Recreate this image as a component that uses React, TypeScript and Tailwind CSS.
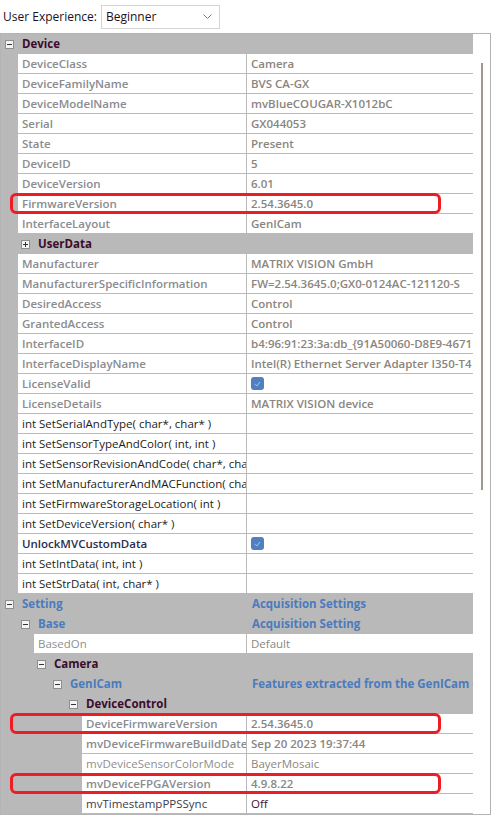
import React from "react";

const FONT = "font-['Open_Sans','Noto_Sans',sans-serif]";

const TONE = {
  gname: "font-semibold text-[#8a8c90]",
  gval: "font-semibold text-[#8a857e]",
  fn: "text-[#1b1b1b]",
  navy: "font-semibold text-[#2a2d4f]",
  light: "text-[#8f8f8f]",
  lightv: "text-[#8b867f]",
  dark: "text-[#3c3c4c]",
  maroon: "text-[#3d1030]",
  blue: "font-bold text-[#4b7bbd]",
  head: "font-bold text-[#3b0c2c]",
};
type Tone = keyof typeof TONE;

type Group = { kind: "group"; level: number; label: string; tone: Tone; value?: string; open?: boolean };
type Leaf = { kind: "leaf"; indent: number; name: string; value?: string; nt: Tone; vt?: Tone; check?: boolean };
type Row = Group | Leaf;

const dev = (name: string, value?: string, check?: boolean): Leaf => ({
  kind: "leaf", indent: 18, name, value, nt: "gname", vt: "gval", check,
});
const fn = (name: string): Leaf => ({ kind: "leaf", indent: 18, name, nt: "fn" });

const ROWS: Row[] = [
  { kind: "group", level: 0, label: "Device", tone: "head", open: true },
  dev("DeviceClass", "Camera"),
  dev("DeviceFamilyName", "BVS CA-GX"),
  dev("DeviceModelName", "mvBlueCOUGAR-X1012bC"),
  dev("Serial", "GX044053"),
  dev("State", "Present"),
  dev("DeviceID", "5"),
  dev("DeviceVersion", "6.01"),
  dev("FirmwareVersion", "2.54.3645.0"),
  dev("InterfaceLayout", "GenICam"),
  { kind: "group", level: 1, label: "UserData", tone: "head", open: false },
  dev("Manufacturer", "MATRIX VISION GmbH"),
  dev("ManufacturerSpecificInformation", "FW=2.54.3645.0;GX0-0124AC-121120-S"),
  dev("DesiredAccess", "Control"),
  dev("GrantedAccess", "Control"),
  dev("InterfaceID", "b4:96:91:23:3a:db_{91A50060-D8E9-4671"),
  dev("InterfaceDisplayName", "Intel(R) Ethernet Server Adapter I350-T4"),
  dev("LicenseValid", undefined, true),
  dev("LicenseDetails", "MATRIX VISION device"),
  fn("int SetSerialAndType( char*, char* )"),
  fn("int SetSensorTypeAndColor( int, int )"),
  fn("int SetSensorRevisionAndCode( char*, char* )"),
  fn("int SetManufacturerAndMACFunction( char* )"),
  fn("int SetFirmwareStorageLocation( int )"),
  fn("int SetDeviceVersion( char* )"),
  { kind: "leaf", indent: 18, name: "UnlockMVCustomData", nt: "navy", check: true },
  fn("int SetIntData( int, int )"),
  fn("int SetStrData( int, char* )"),
  { kind: "group", level: 0, label: "Setting", tone: "blue", value: "Acquisition Settings", open: true },
  { kind: "group", level: 1, label: "Base", tone: "blue", value: "Acquisition Setting", open: true },
  { kind: "leaf", indent: 34, name: "BasedOn", value: "Default", nt: "light", vt: "lightv" },
  { kind: "group", level: 2, label: "Camera", tone: "head", open: true },
  { kind: "group", level: 3, label: "GenICam", tone: "blue", value: "Features extracted from the GenICam device XML file", open: true },
  { kind: "group", level: 4, label: "DeviceControl", tone: "head", open: true },
  { kind: "leaf", indent: 82, name: "DeviceFirmwareVersion", value: "2.54.3645.0", nt: "gname", vt: "gval" },
  { kind: "leaf", indent: 82, name: "mvDeviceFirmwareBuildDate", value: "Sep 20 2023 19:37:44", nt: "gname", vt: "gval" },
  { kind: "leaf", indent: 82, name: "mvDeviceSensorColorMode", value: "BayerMosaic", nt: "light", vt: "lightv" },
  { kind: "leaf", indent: 82, name: "mvDeviceFPGAVersion", value: "4.9.8.22", nt: "gname", vt: "gval" },
  { kind: "leaf", indent: 82, name: "mvTimestampPPSSync", value: "Off", nt: "dark", vt: "maroon" },
];

function Toggle({ open }: { open?: boolean }) {
  return (
    <span className="relative block h-[9px] w-[9px] border border-[#8e8e8e] bg-[#f4f4f4]">
      <span className="absolute left-[1px] top-[3px] h-[1px] w-[5px] bg-[#333]" />
      {!open && <span className="absolute left-[3px] top-[1px] h-[5px] w-[1px] bg-[#333]" />}
    </span>
  );
}

function Check() {
  return (
    <span className="flex h-[13px] w-[13px] items-center justify-center rounded-[3px] bg-[#5080bd]">
      <svg width="7" height="6" viewBox="0 0 7 6">
        <path d="M1 3.2 L2.8 5 L6 1" fill="none" stroke="#c9d7ea" strokeWidth="0.8" />
      </svg>
    </span>
  );
}

function GroupRow({ r }: { r: Group }) {
  return (
    <div className="flex h-[20px] items-center bg-[#b9b9b9]">
      <div className="flex w-[246px] shrink-0 items-center overflow-hidden whitespace-nowrap">
        <div style={{ width: 4 + 16 * r.level }} className="shrink-0" />
        <Toggle open={r.open} />
        <span className={`ml-[8px] ${TONE[r.tone]}`}>{r.label}</span>
      </div>
      <div className={`w-[226px] overflow-hidden whitespace-nowrap pl-[5px] ${TONE[r.tone]}`}>{r.value}</div>
    </div>
  );
}

function LeafRow({ r }: { r: Leaf }) {
  return (
    <div className="flex h-[20px]">
      <div style={{ width: r.indent - 1 }} className="shrink-0 bg-[#b9b9b9]" />
      <div className="flex flex-1 items-center overflow-hidden whitespace-nowrap border-b border-[#bababa] bg-white pl-[4px]">
        <span className={TONE[r.nt]}>{r.name}</span>
      </div>
      <div className="w-[1px] shrink-0 bg-[#bababa]" />
      <div className="flex w-[226px] shrink-0 items-center overflow-hidden whitespace-nowrap border-b border-[#bababa] bg-white pl-[4px]">
        {r.check ? <Check /> : <span className={r.vt ? TONE[r.vt] : ""}>{r.value}</span>}
      </div>
    </div>
  );
}

function Mark({ top }: { top: number }) {
  return (
    <div
      style={{ top }}
      className="pointer-events-none absolute left-[10px] h-[21px] w-[431px] rounded-[6px] border-[3px] border-[#ee1d25]"
    />
  );
}

export default function App() {
  return (
    <div className={`relative h-[817px] w-[497px] overflow-hidden bg-white text-[11.5px] ${FONT}`}>
      <div className="flex h-[33px] items-center pl-[3px] text-[12px]">
        <span className="text-[#1c1020]">User Experience:</span>
        <div className="ml-[4px] flex h-[24px] w-[119px] items-center justify-between border border-[#d4d4d4] pl-[4px] pr-[7px]">
          <span className="text-[#1c1020]">Beginner</span>
          <svg width="9" height="5" viewBox="0 0 9 5">
            <path d="M0.5 0.5 L4.5 4.5 L8.5 0.5" fill="none" stroke="#7a7a7a" strokeWidth="1" />
          </svg>
        </div>
      </div>

      <div className="flex w-[491px] border border-[#b4b4b4]">
        <div className="w-[472px] shrink-0">
          {ROWS.map((r, i) =>
            r.kind === "group" ? <GroupRow key={i} r={r} /> : <LeafRow key={i} r={r} />
          )}
        </div>
        <div className="flex flex-1 justify-center bg-white pt-[29px]">
          <div className="h-[427px] w-[2px] bg-[#9f988f]" />
        </div>
      </div>

      <Mark top={193} />
      <Mark top={713} />
      <Mark top={773} />
    </div>
  );
}
